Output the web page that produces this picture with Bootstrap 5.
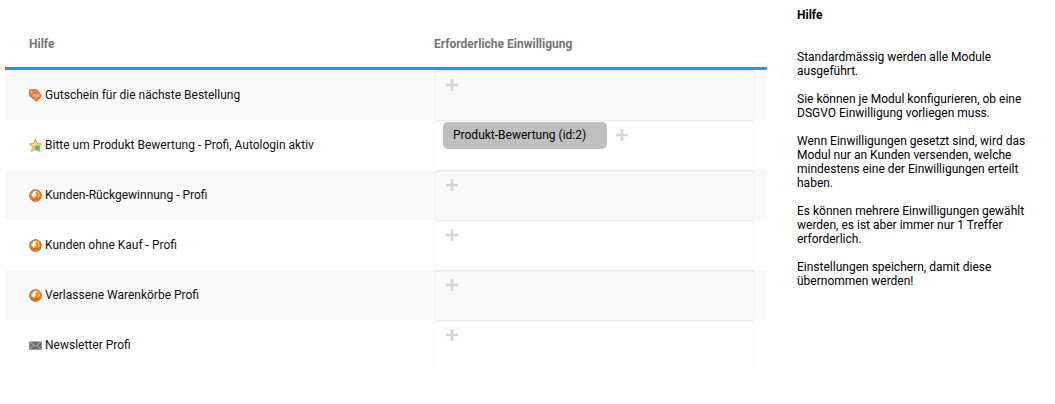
<!DOCTYPE html>
<html lang="de">
<head>
<meta charset="utf-8">
<title>Hilfe</title>
<link href="https://cdn.jsdelivr.net/npm/bootstrap@5.3.0/dist/css/bootstrap.min.css" rel="stylesheet">
<style>
body{font-family:Roboto,sans-serif;font-size:12px;line-height:14px;color:#111;background:#fff}
.modules{width:762px;margin-left:5px}
.head-row{height:70px;padding-top:20px;border-bottom:3px solid #2196f3;color:#757575}
.module-row{height:50px}
.module-row:nth-child(even){background:#f9f9f9}
.name-cell{width:429px;padding-left:24px;flex:none}
.module-name{gap:3px}
.module-name svg{width:13px;height:13px;flex:none}
.drop-box{width:321px;height:50px;border-radius:4px;padding:2px 9px;box-shadow:inset 0 1px 2px rgba(0,0,0,.1)}
.module-row:last-child .drop-box{clip-path:inset(0 0 2px 0)}
.chip{width:164px;height:27px;background:#bfbfbf;border-radius:5px;padding:0 10px 1px;color:#000}
.plus{width:12px;height:12px;margin:7px 0 0 3px;display:block}
.chip + .plus{margin-left:9px}
.help{width:236px;margin-left:30px;padding-top:8px;color:#000}
.help p{margin-bottom:14px}
.help .title{margin-bottom:28px}
</style>
</head>
<body>
<svg class="d-none">
  <symbol id="plus" viewBox="0 0 12 12"><path d="M4.7 0h2.6v4.7H12v2.6H7.3V12H4.7V7.3H0V4.7h4.7z" fill="#d5d5d5"/></symbol>
  <symbol id="tag" viewBox="0 0 13 13"><path d="M.6 1.2Q4-.4 8 .9l4.7 5.8-5.2 5.8L.8 7Q-.2 3.6.6 1.2z" fill="#f47b38" stroke="#a87355" stroke-width=".8"/><circle cx="2.6" cy="2.7" r="1" fill="#fff" stroke="#777" stroke-width=".5"/><path d="M3.5 7h2V5.2L3.8 7M6.9 4.7v4.2M8 6.8h2.5M9.2 5.3v3" fill="none" stroke="#ffd5bd" stroke-width=".8"/></symbol>
  <symbol id="star" viewBox="0 0 13 13"><path d="m6.4.4 1.8 4.1 4.5.4-3.4 2.9 1.2 4.7-4.1-2.4-4 2.4 1.2-4.7L.3 4.9l4.4-.4z" fill="#fbcf62" stroke="#c89a48" stroke-width=".8"/><path d="M6.4 2.2 5.3 5.3 2.2 5.5l3.3.8z" fill="#fff3bd"/><rect x="6" y="6.7" width="4.8" height="4.6" rx="1.3" fill="#50b872" stroke="#83cc8e" stroke-width=".6"/></symbol>
  <symbol id="back" viewBox="0 0 13 13"><circle cx="6.5" cy="6.5" r="5.9" fill="#f0881d" stroke="#9c6845" stroke-width=".8"/><path d="M1.8 8.4Q3.4 12 7.5 11.5 11.3 11 11.7 6.3 9.5 9.5 6 9z" fill="#e86b0c"/><path d="M9 2.2Q4.2.8 3.4 5.2H1.9L4.8 9l2.8-3.8H6Q6.2 3 9 2.2z" fill="#fff"/><path d="M9 3Q11 5.5 9 8.5" fill="none" stroke="#ffbd60" stroke-width="1.2"/></symbol>
  <symbol id="mail" viewBox="0 0 13 13"><path d="M.2 2.5h12.6v8.2H.2z" fill="#6f6f6f"/><path d="m1 3.2 5.5 4 5.5-4M1 10l3.9-3.6M12 10 8.1 6.4" fill="none" stroke="#bcbcbc" stroke-width=".8"/></symbol>
</svg>
<main class="d-flex align-items-start">
  <section class="modules">
    <div class="head-row d-flex align-items-center fw-bold"><div class="name-cell">Hilfe</div><div>Erforderliche Einwilligung</div></div>
    <div class="module-row d-flex"><div class="name-cell module-name d-flex align-items-center"><svg><use href="#tag"/></svg><span>Gutschein für die nächste Bestellung</span></div><div class="drop-box d-flex"><svg class="plus"><use href="#plus"/></svg></div></div>
    <div class="module-row d-flex"><div class="name-cell module-name d-flex align-items-center"><svg><use href="#star"/></svg><span>Bitte um Produkt Bewertung - Profi, Autologin aktiv</span></div><div class="drop-box d-flex"><div class="chip d-flex align-items-center">Produkt-Bewertung (id:2)</div><svg class="plus"><use href="#plus"/></svg></div></div>
    <div class="module-row d-flex"><div class="name-cell module-name d-flex align-items-center"><svg><use href="#back"/></svg><span>Kunden-Rückgewinnung - Profi</span></div><div class="drop-box d-flex"><svg class="plus"><use href="#plus"/></svg></div></div>
    <div class="module-row d-flex"><div class="name-cell module-name d-flex align-items-center"><svg><use href="#back"/></svg><span>Kunden ohne Kauf - Profi</span></div><div class="drop-box d-flex"><svg class="plus"><use href="#plus"/></svg></div></div>
    <div class="module-row d-flex"><div class="name-cell module-name d-flex align-items-center"><svg><use href="#back"/></svg><span>Verlassene Warenkörbe Profi</span></div><div class="drop-box d-flex"><svg class="plus"><use href="#plus"/></svg></div></div>
    <div class="module-row d-flex"><div class="name-cell module-name d-flex align-items-center"><svg><use href="#mail"/></svg><span>Newsletter Profi</span></div><div class="drop-box d-flex"><svg class="plus"><use href="#plus"/></svg></div></div>
  </section>
  <aside class="help">
    <p class="title fw-bold">Hilfe</p>
    <p>Standardmässig werden alle Module<br>ausgeführt.</p>
    <p>Sie können je Modul konfigurieren, ob eine<br>DSGVO Einwilligung vorliegen muss.</p>
    <p>Wenn Einwilligungen gesetzt sind, wird das<br>Modul nur an Kunden versenden, welche<br>mindestens eine der Einwilligungen erteilt<br>haben.</p>
    <p>Es können mehrere Einwilligungen gewählt<br>werden, es ist aber immer nur 1 Treffer<br>erforderlich.</p>
    <p>Einstellungen speichern, damit diese<br>übernommen werden!</p>
  </aside>
</main>
<script src="https://cdn.jsdelivr.net/npm/bootstrap@5.3.0/dist/js/bootstrap.bundle.min.js"></script>
</body>
</html>
